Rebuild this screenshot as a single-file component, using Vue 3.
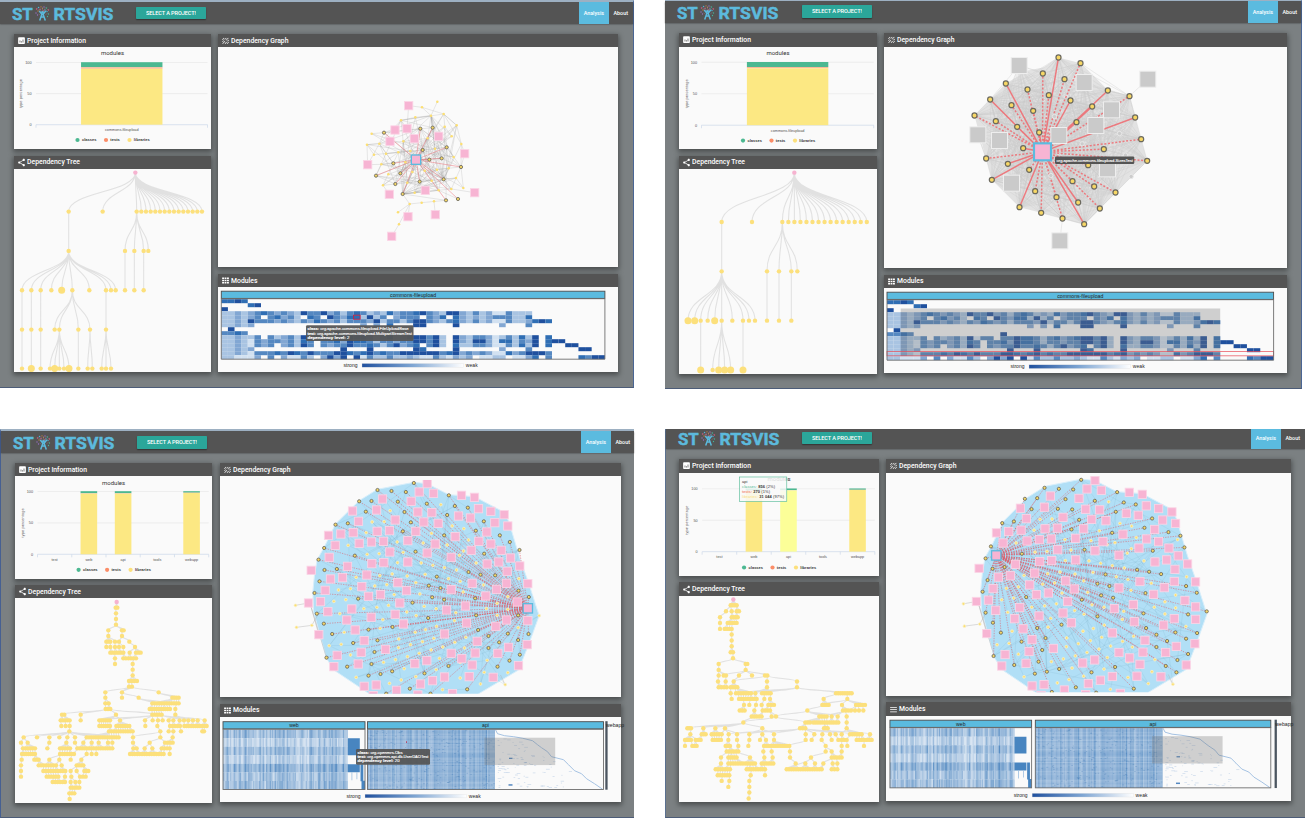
<script setup>
const rng = (seed) => () => {
  seed = (seed + 0x6d2b79f5) | 0
  let t = Math.imul(seed ^ (seed >>> 15), 1 | seed)
  t = (t + Math.imul(t ^ (t >>> 7), 61 | t)) ^ t
  return ((t ^ (t >>> 14)) >>> 0) / 4294967296
}
const pts = (s) => s.trim().split(/[\s;]+/).map((p) => p.split(',').map(Number))
const dist = (a, b) => Math.hypot(a[0] - b[0], a[1] - b[1])
const line = (a, b) => `M${a[0]} ${a[1]}L${b[0]} ${b[1]}`
const curve = (a, b) => {
  const m = (a[1] + b[1]) / 2
  return `M${a[0]} ${a[1]}C${a[0]} ${m} ${b[0]} ${m} ${b[0]} ${b[1]}`
}

/* ---------- dependency graphs ---------- */
function smallGraph() {
  const squares = pts('281,317;240,390;276,386;298,416;371,409;225,424;449,461;158,494;223,583;331,571;479,578;279,650;361,644;230,709')
  const ringed = pts('207,398;316,386;353,383;395,442;323,450;380,475;343,479;235,490;438,501;183,527;256,520;241,552;314,545;386,538;263,582;393,601;429,597')
  const plain = pts('367,305;321,322;348,347;386,342;301,352;258,361;425,376;389,380;170,401;410,409;156,434;193,431;439,432;177,464;213,461;250,457;265,424;338,415;286,453;360,446;416,471;199,493;271,487;220,523;329,512;366,509;401,505;292,516;277,548;204,556;423,534;350,542;371,571;409,567;445,564;299,578;284,612;320,608;357,604;249,637;252,673')
  const sel = [303, 479]
  const inner = [...ringed, ...plain.filter((p) => p[1] < 600 && p[1] > 340)]
  const r = rng(7)
  let edges = ''
  inner.forEach((a, i) => inner.forEach((b, j) => {
    if (j > i && dist(a, b) < 150 && r() < 0.17) edges += line(a, b)
  }))
  const hubs = pts('386,538;263,582;348,347;323,450;395,442;303,479')
  hubs.forEach((h) => inner.forEach((b) => { if (dist(h, b) < 170 && r() < 0.42) edges += line(h, b) }))
  const extra = pts('230,709;252,673;252,673;284,612;249,637;284,612;279,650;284,612;361,644;357,604;479,578;409,567;367,305;348,347;281,317;321,322;281,317;276,386;158,494;156,434;158,494;199,493;158,494;193,431;321,322;348,347;258,361;301,352;386,342;425,376;439,432;425,376;284,612;263,582;284,612;320,608;320,608;393,601;156,434;193,431;170,401;207,398;445,564;438,501;449,461;438,501;223,583;204,556;449,461;439,432;321,322;386,342;258,361;240,390;331,571;263,582')
  for (let i = 0; i < extra.length; i += 2) edges += line(extra[i], extra[i + 1])
  return { tf: 'translate(315 0) scale(.33333)', clip: [218, 47, 400, 220], squares, ringed, plain, sel, size: 25, r: 4.8, pr: 3.8, edges, solid: ringed.map((p) => line(sel, p)).join(''), kind: 'small' }
}
function greyGraph() {
  const squares = pts('164,195;550,236;359,246;441,328;394,375;283,405;40,403;105,420;141,548;429,505;286,721')
  const solidPts = pts('282,171;124,249;318,300;430,270;77,297;383,318;158,379;336,365;512,351;224,396;176,443;130,490;82,538;341,606;165,620;359,671')
  const dashPts = pts('348,188;235,219;300,236;189,267;253,284;495,287;141,314;206,331;30,345;94,362;530,416;418,446;65,474;548,481;194,508;371,494;324,542;389,558;453,576;212,572;276,590;230,637;406,624;294,654')
  const muted = pts('270,348;353,430;465,399;483,464;259,525;500,528')
  const sel = [234, 454]
  const all = [...solidPts, ...dashPts]
  const r = rng(3)
  let edges = ''
  all.forEach((a, i) => all.forEach((b, j) => { if (j > i && r() < 0.55) edges += line(a, b) }))
  edges += line([550, 236], [495, 287]) + line([286, 721], [294, 654]) + line([40, 403], [65, 474])
  squares.slice(0, 10).forEach((s) => all.forEach((b) => { if (s[0] !== 550 && r() < 0.4) edges += line(s, b) }))
  return { tf: 'translate(965 0) scale(.33333)', clip: [885, 47, 402, 221], squares, ringed: all, plain: [], muted, sel, size: 48, r: 7.6, pr: 5, edges, hull: '282,171 348,188 430,270 495,287 512,351 530,416 548,481 500,528 453,576 406,624 359,671 294,654 230,637 165,620 82,538 65,474 50,420 30,345 77,297 124,249 190,210 240,200', solid: solidPts.map((p) => line(sel, p)).join(''), dashed: dashPts.map((p) => line(sel, p)).join(''), kind: 'grey' }
}
const bigSquares = pts('335,176;311,201;354,205;438,211;477,217;201,222;287,229;489,251;183,255;111,258;307,261;349,263;526,259;566,269;429,273;465,279;129,289;239,285;325,291;368,295;538,293;577,303;39,331;76,327;113,323;185,319;222,317;301,319;514,321;419,335;131,355;168,351;204,349;277,347;490,349;526,357;359,357;59,361;223,381;335,384;467,376;557,376;41,397;407,397;585,399;96,424;169,416;205,413;277,411;515,417;550,411;613,423;575,439;154,450;81,458;45,462;247,473;470,475;573,475;637,476;139,485;273,497;407,494;543,493;29,496;159,514;195,509;511,513;15,530;253,534;605,531;37,560;109,552;450,543;393,555;637,550;167,577;239,568;94,585;264,597;453,594;573,585;637,587;541,604;119,615;387,627;146,647;485,649;10,629;635,659;579,667;65,691;137,682;210,673;407,685;479,684;547,685;439,701;55,725;128,717;298,716;334,707;470,720;609,722;146,784;182,780;315,777;351,767;387,756;461,755;533,757;243,796;173,812;307,810;411,806;-13,436;-21,534')
const bigRinged = pts('295,174;186,195;228,198;271,201;131,229;168,228;247,230;334,236;400,211;418,243;457,248;151,260;267,261;395,270;286,292;60,299;97,295;505,289;481,317;553,331;262,319;386,331;583,351;26,369;612,375;9,404;118,392;300,380;506,386;64,432;27,435;459,441;539,451;495,449;364,455;12,469;340,482;375,489;609,497;-3,504;128,521;350,517;386,524;479,520;640,516;291,533;4,566;338,579;482,571;608,571;25,596;159,614;231,606;488,615;639,627;50,627;113,654;186,646;519,633;577,626;608,645;551,652;519,669;177,681;33,698;613,689;95,725;168,717;582,707;546,725;159,752;195,747;230,739;399,723;327,745;283,791;455,793;345,806;212,806')
const bigPlain = pts('376,239;224,257;206,290;170,291;410,303;445,311;152,323;348,325;459,345;98,361;245,351;323,354;371,366;395,360;155,388;191,386;263,382;444,378;432,391;246,413;317,414;352,421;387,428;423,435;482,414;610,461;122,457;193,452;230,447;275,453;329,448;399,461;434,469;178,483;214,479;301,473;69,495;105,491;504,480;236,509;313,507;443,501;577,515;55,529;91,524;545,535;73,566;145,551;184,547;219,541;326,544;362,551;513,551;577,553;545,571;202,584;274,561;302,572;421,563;417,587;86,622;194,610;299,622;363,604;330,614;608,608;250,642;285,659;321,650;355,640;418,652;451,637;41,662;77,658;249,668;347,675;382,666;311,685;447,669;105,690;240,704;204,712;276,695;372,700;515,706;266,731;362,734;434,712;301,755;434,759;506,742;577,743;122,757;222,775;257,765;495,777;381,794;671,572;569,779')
const bigHull = pts('295,172;335,176;400,209;477,215;566,262;580,290;613,400;640,476;671,572;639,660;609,735;480,812;170,812;55,735;33,700;-6,560;-8,500;-3,450;5,404;26,367;60,297;131,227;186,193')
const tails = pts('-60,541;-57,607;-11,601')
function bigGraph(second) {
  const f = second ? (p) => [p[0] + 53.5, p[1] * 1.0147 - 13.6] : (p) => p
  const ringed = second
    ? pts('347,163;237,187;280,190;323,192;178,220;215,218;300,221;388,226;455,200;475,231;511,237;198,251;277,250;320,252;451,259;341,283;110,293;145,288;560,279;537,307;609,320;318,312;440,322;645,331;76,363;657,366;60,399;169,385;357,373;562,376;81,430;117,425;515,433;551,439;587,446;420,447;66,464;396,475;432,482;662,482;51,499;182,515;407,510;443,517;540,503;694,502;349,523;60,562;396,573;534,564;668,567;724,558;82,592;215,608;288,598;542,608;695,623;630,621;106,622;168,649;240,638;573,628;605,647;662,640;573,665;230,674;84,692;668,686;146,719;219,709;636,704;601,722;633,741;208,745;244,739;281,731;449,725;378,741;331,786;505,790;392,802;259,800')
    : bigRinged
  const sel = second ? [92, 390] : [637, 550]
  const plain = (second ? [...bigPlain, ...bigRinged] : bigPlain).map(f).filter((p) => !second || ringed.every((q) => dist(p, q) > 14))
  const squares = bigSquares.map(f).filter((p) => dist(p, sel) > 12)
  const r = rng(11)
  const all = [...ringed, ...plain]
  let edges = ''
  for (let i = 0; i < 130; i++) edges += line(all[Math.floor(r() * all.length)], all[Math.floor(r() * all.length)])
  const [t1, t2, t3] = tails.map(f)
  const tailEdges = line(t1, f([-21, 534])) + line(t2, t3) + line(t3, f([12, 560])) + line(f([-15, 540]), f([33, 698])) + line(f([-15, 540]), f([10, 629])) + line(f([569, 779]), f([555, 750]))
  return { tf: `translate(${second ? 965 : 315} 425) scale(.33333)`, clip: second ? [886, 475.5, 404, 216.5] : [220, 480, 400, 213.7], squares, ringed, plain: [...plain, t1, t2, t3], sel, size: 25, r: 4.8, pr: 4.2, edges, tailEdges, hull: bigHull.map(f).join(' '), dashed: ringed.map((p) => line(sel, p)).join(''), kind: 'big' }
}

/* ---------- dependency trees ---------- */
function tree(tf, root, levels, links, big) {
  const nodes = levels.flatMap(([y, xs]) => xs.map((x) => [x, y, big.some((b) => b[0] === x && b[1] === y) ? 10.5 : 6.6]))
  return { tf, root, nodes, links: links.map(([x, y, ty, xs]) => xs.map((t) => curve([x, y], [t, ty])).join('')).join('') }
}
const seq = (a, n, step) => Array.from({ length: n }, (_, i) => a + i * step)
const fan1 = seq(410, 15, 14)
const fan2 = seq(367, 15, 18.1)
const tree1 = tree('scale(.33333)', [406, 517],
  [[634, [206, 308, ...fan1]], [752, [206, 375, 403, 431, 445]], [870, [66, 94, 122, 154, 185, 217, 268, 318, 333, 347, 375, 403, 431]], [988, [66, 94, 122, 164, 178, 235, 270, 318]], [1105, [66, 94, 122, 150, 164, 178, 192, 207, 235, 263, 277, 305, 318, 333]]],
  [[406, 517, 634, [206, 308, ...fan1]], [206, 634, 752, [206]], [410, 634, 752, [375, 403, 431, 445]], [206, 752, 870, [66, 94, 122, 154, 185, 217, 268, 318, 333, 347]], [375, 752, 870, [375]], [403, 752, 870, [403]], [431, 752, 870, [431]], [66, 870, 1105, [66]], [94, 870, 1105, [94]], [122, 870, 1105, [122]], [217, 870, 988, [164, 178, 235, 270]], [318, 870, 988, [318]], [178, 988, 1105, [150, 164, 178, 192, 207]], [235, 988, 1105, [235]], [270, 988, 1105, [263, 277]], [318, 988, 1105, [305, 318, 333]]],
  pts('185,870;94,1105;164,1105;207,1105'))
const tree2 = tree('translate(660 0) scale(.33333)', [403, 518],
  [[666, [185, 276, ...fan2]], [814, [185, 321, 357, 394, 412]], [962, [84, 104, 122, 143, 164, 185, 217, 249, 267, 285, 321, 357, 394]], [1110, [122, 158, 176, 194, 212, 249]]],
  [[403, 518, 666, [185, 276, ...fan2]], [185, 666, 814, [185]], [367, 666, 814, [321, 357, 394, 412]], [185, 814, 962, [84, 104, 122, 143, 164, 185, 217, 249, 267, 285]], [321, 814, 962, [321]], [357, 814, 962, [357]], [394, 814, 962, [394]], [122, 962, 1110, [122]], [185, 962, 1110, [158, 176, 194, 212]], [249, 962, 1110, [249]]],
  pts('84,962;104,962;164,962;122,1110;176,1110;194,1110;212,1110;249,1110'))

function denseTree(tf, root, spec, long) {
  const rows = spec.trim().split(/\n/).map((l) => {
    const [y, rest] = l.trim().split(':')
    const xs = rest.split(',').flatMap((s) => {
      const [a, b] = s.split('-').map(Number)
      if (b === undefined) return [a]
      const n = Math.max(1, Math.round((b - a) / 7))
      return seq(a, n + 1, (b - a) / n)
    })
    return [Number(y), xs]
  })
  let links = ''
  rows.forEach(([y, xs], i) => {
    const [py, pxs] = i ? rows[i - 1] : [root[1], [root[0]]]
    xs.forEach((x) => {
      const p = pxs.reduce((m, c) => (Math.abs(c - x) < Math.abs(m - x) ? c : m))
      if (Math.abs(p - x) < 62) links += curve([p, py], [x, y])
    })
  })
  long.forEach((l) => { links += curve([l[0], l[1]], [l[2], l[3]]) })
  return { tf, root, nodes: rows.flatMap(([y, xs]) => xs.map((x) => [x, y, 6.6])), links }
}
const tree3 = denseTree('translate(0 425) scale(.33333)', [350, 531], `548:347-352
565:348
582:348
599:348
616:325,366-371
633:325,366
650:319-331,345,357,388
666:319,331,345,357,370,405
683:331-370,389,408-422
700:345,370-408
717:345,398
734:398
751:398
768:387-411
785:387,396
802:316,366,476
818:316,366,416,517-536
835:316-326,457-536
852:317-331,449-510,526
869:186-193,242,348,457-485,526
886:182-209,242,298-330,360,435,458,474,488,506,520,539,552,565,579,593,614
903:184,197,209,298-330,349-388,436,472,510-540,553-620
919:208,327-398,481,506,520,543,607-612
937:71,111,148,178,202,225,260-356,399,481,518
953:63,83,148,199,225,250,275,296,324,337,399,449,495-518
970:69-105,142,180-210,232-337,400-410,434,457,485-509
987:66-105,180-222,260,275,289,390-491,509
1004:65,103-116,148,178,212,244
1021:63,116-168,185,230-250
1038:63,130-196,212,230,253-265
1055:63,140-175,195,214,240-257
1071:158-195,212,226,238
1088:212-238
1105:208-223
1122:209`, [[387, 785, 316, 802], [396, 785, 476, 802], [396, 785, 366, 802], [366, 802, 416, 818], [416, 818, 457, 835], [416, 818, 470, 835], [476, 802, 517, 818], [476, 802, 530, 818], [416, 818, 500, 835], [317, 852, 242, 869], [317, 852, 186, 869], [331, 852, 348, 869], [331, 852, 457, 869], [331, 852, 470, 869], [457, 869, 360, 886], [457, 869, 298, 886], [470, 869, 318, 886], [485, 869, 614, 886], [485, 869, 565, 886], [485, 869, 540, 886], [208, 919, 71, 937], [208, 919, 111, 937], [208, 919, 148, 937], [208, 919, 260, 937], [208, 919, 290, 937], [208, 919, 320, 937], [208, 919, 356, 937], [481, 919, 399, 937]])
const tree4 = denseTree('translate(660 425) scale(.33333)', [220, 524], `541:212-230
559:198,215,230-237
577:180,215-233
594:180,203-230
612:180,194-215
629:215
647:215
664:215
682:212-219
700:219
717:176,257-262
735:176,257
752:176,191-198,237,276,315-322
770:174,197,221,321,411
787:176-200,212-232,321,411
805:212,228-273,286,306-332,528-575
822:215,237-290,313,330,491,562
840:252,268,288,305,325-342,487-506,546,588-615
857:239-254,283,308-330,442,549-573,585,597,610
875:275-305,335,348,478-500,515,533,560
893:250,436-450,460-535,560
910:82-93,130,166,195,307,420-436,492-503,560
928:91,125-137,155-185,206,231,268,307,342,437,463,487,510,527,545,570-605,630
945:75-93,107-122,158-183,205,231,268,300,318,342,437,455,485,515,535,545-560,590-635
963:75,97-110,197-210,235,265,312-388,497,545,562,612
980:200-235,310,335,390,497,515,545
998:183,205-230,270,313,338,390,453,515-545
1016:183,205-285,305-340,407,436,465,490,518,532
1033:167-210,260-315,380-485,515-532
1051:173-208,272,315
1068:185,208,268
1086:205,268
1103:268
1121:266`, [[257, 735, 191, 752], [257, 735, 322, 752], [322, 752, 411, 770], [315, 752, 221, 770], [411, 787, 240, 805], [411, 787, 286, 805], [411, 787, 320, 805], [411, 787, 528, 805], [411, 787, 545, 805], [562, 822, 491, 840], [562, 822, 600, 840], [442, 857, 348, 875], [442, 857, 533, 875], [442, 857, 500, 875], [348, 875, 250, 893], [348, 875, 436, 893], [250, 893, 88, 910], [250, 893, 130, 910], [250, 893, 166, 910], [250, 893, 195, 910], [250, 893, 307, 910], [420, 910, 206, 928], [420, 910, 231, 928], [420, 910, 268, 928], [420, 910, 342, 928], [436, 910, 570, 928], [436, 910, 630, 928], [436, 910, 527, 928], [342, 945, 388, 963], [437, 945, 388, 963], [453, 998, 390, 1033], [497, 980, 453, 998]])

/* ---------- matrices ---------- */
const blues = ['', '#d2e1f1', '#a9c4e2', '#82a7d3', '#5588c1', '#2f6eb4', '#1f509e']
const matrixRows = [
  '5565',
  '000056',
  '6',
  '22323454343264463424542325344564326632423114222',
  '22323404534205406435526240344404350532323444225',
  '22326444343243543424443624424664324532423114223565',
  '22323000000000000000030305000660000600000030004',
  '06',
  '44540000000000000600',
  '22322404234261440446554245345664620632443124252',
  '22321434434254044536554244344664620632663155243',
  '22321434034264043446445424634504620522443114252',
  '22323000000000000060006000000650000600000030004',
  '22321444546546444665456454466666645634343115346',
  '22111304031142036360614224223211421323011220113',
]
const rowTails = { 9: [[47, 6], [49, 5]], 10: [[47, 6], [49, 5], [50, 6], [51, 6]], 11: [[47, 6], [49, 5], [52, 6], [53, 6]], 12: [[54, 6], [55, 6]], 13: [[47, 6], [48, 6], [49, 4]], 14: [[47, 5], [49, 4], [54, 5], [55, 4], [56, 6], [57, 6]] }
const cells = matrixRows.flatMap((row, y) => {
  const c = [...row.slice(0, rowTails[y] ? 47 : 58)].map((v, x) => [x, y, Number(v)])
  return [...c, ...(rowTails[y] || []).map(([x, v]) => [x, y, v])].filter((k) => k[2] > 0)
})
const mix = (t) => {
  const a = [212, 226, 241], b = [72, 130, 189]
  return `rgb(${a.map((v, i) => Math.round(v + (b[i] - v) * t)).join(',')})`
}
const rw = rng(21)
const webCols = Array.from({ length: 104 }, () => [rw(), rw()])
const webStripes = []
for (let y = 0; y < 7; y++) webCols.forEach(([c, d], x) => {
  const base = [0.44, 0.2, 0.42, 0.22, 0.54, 0.36, 0.42][y]
  webStripes.push([x * 1.2, y * 8.55, mix(Math.max(0, Math.min(1, base + (c - 0.5) * 0.5 + (d > 0.92 ? 0.35 : 0) + (rw() - 0.5) * 0.3 - (x > 55 && x < 72 ? 0.15 : 0))))])
})
const ra = rng(5)
const apiCols = Array.from({ length: 98 }, () => [ra() * 1.3, mix(0.36 + ra() * 0.34 + (ra() > 0.9 ? 0.2 : 0))])
const apiRows = Array.from({ length: 46 }, (_, i) => [i * 1.3, ra() * 0.24])
const specks = Array.from({ length: 110 }, () => [130 + Math.pow(ra(), 1.5) * 75, 8 + ra() * 51, 0.6 + ra() * 3.2]).filter((s) => s[0] < 132 + s[1] * 1.75)
const dust = Array.from({ length: 260 }, () => [ra() * 126, ra() * 59, 1 + ra()])
const stair = '128,0 130,4 137,6 146,7 155,8.5 165,11 170,15 174,18 180,22 184,27 196,30 201,35 207,41 214,44 219,49 227,54 235,59.5'

/* ---------- chart geometry ---------- */
const five = ['test', 'web', 'api', 'tools', 'webapp']
const mkChart = (x0, x1, y0, y1, cx, ty, cy, ly, names, bars) => {
  const w = (x1 - x0) / names.length
  return { x0, x1, y0, y1, cx, ty, ly, ticks: seq(x0, names.length + 1, w), labels: names.map((n, i) => ({ n, x: x0 + w * (i + 0.5), y: cy })), bars: bars.map(([i, g, hot]) => ({ x: x0 + w * (i + 0.5) - (names.length === 1 ? 40.7 : 8.3), w: names.length === 1 ? 81.4 : 16.6, g, hot })) }
}
const icons = {
  info: 'M19 3H5c-1.1 0-2 .9-2 2v14c0 1.1.9 2 2 2h14c1.1 0 2-.9 2-2V5c0-1.1-.9-2-2-2zM9 17H7v-5h2v5zm4 0h-2v-3h2v3zm4 0h-2V9h2v8z',
  share: 'M18 16.08c-.76 0-1.44.3-1.96.77L8.91 12.7c.05-.23.09-.46.09-.7s-.04-.47-.09-.7l7.05-4.11c.54.5 1.25.81 2.04.81 1.66 0 3-1.34 3-3s-1.34-3-3-3-3 1.34-3 3c0 .24.04.47.09.7L8.04 9.81C7.5 9.31 6.79 9 6 9c-1.66 0-3 1.34-3 3s1.34 3 3 3c.79 0 1.5-.31 2.04-.81l7.12 4.16c-.05.21-.08.43-.08.65 0 1.61 1.31 2.92 2.92 2.92s2.92-1.31 2.92-2.92-1.31-2.92-2.92-2.92z',
  graph: 'M3 9.500l5-5 1.200 1.200-5 5zM3 15l3.500-3.500 1.200 1.200L4.200 16.200zM9 9l4.500-4.500 1.200 1.200-4.500 4.500zM3.500 20l6.500-6.500 1.200 1.200-6.500 6.500zM12.500 11l6.500-6.500 1.200 1.200-6.500 6.500zM10 20l4.500-4.500 1.200 1.200-4.500 4.500zM16.500 13.500l3.500-3.500 1.200 1.200-3.500 3.500zM15.500 20l5-5 1.200 1.200-5 5z',
  grid: 'M3 4h5v4H3zM9.500 4h5v4h-5zM16 4h5v4h-5zM3 10h5v4H3zM9.500 10h5v4h-5zM16 10h5v4h-5zM3 16h5v4H3zM9.500 16h5v4h-5zM16 16h5v4h-5z',
  rows: 'M3 5h18v2H3zM3 11h18v2H3zM3 17h18v2H3z',
}
const fireworks = pts('36.5,7;38.5,5.500;41,4.800;44,5;46.500,6;48.500,8;47,9.500;38,9;36,11;48.500,12;40,7.500;45,8;42.500,6.500;37.500,13;47.500,14.500;43.5,9')
const sparkColors = ['#e0587f', '#4fb6dc', '#c7813f', '#9a6fc4', '#44b39a']

const views = [
  { id: 'one', boxes: ['14 47 196.5 101.5', '14 169 196.5 202.5', '218 47 400 220', '218 287 400 84.5'],
    chart: mkChart(36, 207.5, 62.5, 124.7, 112.5, 55.2, 131, 141.4, ['commons-fileupload'], [[0, [5, 1.6]]]),
    tree: tree1, graph: smallGraph(),
    small: { x: 221.3, y: 299.2, w: 383.6, h: 60, tip: true }, legend: [362, 363.5],
    tip: { x: 306, y: 325.3, w: 107.5, lines: [['class:', 'org.apache.commons.fileupload.FileUploadBase', 101], ['test:', 'org.apache.commons.fileupload.MultipartStreamTest', 106], ['dependency level:', '2', 42]] } },
  { id: 'two', boxes: ['679 46.5 198 102.5', '679 169 198 204.5', '884.5 46.5 403 221.5', '884.5 288.5 403 85'],
    chart: mkChart(701.5, 873.7, 61.8, 124.7, 778, 54.7, 131, 141.5, ['commons-fileupload'], [[0, [5, 1.3]]]),
    tree: tree2, graph: greyGraph(),
    small: { x: 887.5, y: 300.7, w: 386.6, h: 60, brush: true }, legend: [1029.5, 365.3] },
  { id: 'three', boxes: ['15 476 197 102.5', '15 598 197 204.5', '219.5 476 401.5 221', '219.5 717 401.5 85.500'],
    chart: mkChart(37.5, 208.7, 491.5, 554.3, 113.6, 484.7, 560.7, 571.2, five, [[1, [2, 0.5]], [2, [2, 0.5]], [4, [1.5, 0.3]]]),
    tree: tree3, graph: bigGraph(false),
    large: { x: 222.5, y: 729.7, api: 144.5, wx: 382.3, dot: true }, legend: [364.5, 794.2],
    tip: { x: 355.5, y: 749, w: 74, lines: [['class:', 'org.openmrs.Obs', 45], ['test:', 'org.openmrs.api.db.UserDAOTest', 71], ['dependency level:', '20', 42]] } },
  { id: 'four', boxes: ['679 472.5 199.5 103', '679 596.5 199.5 205.5', '885.5 472.5 405 223', '885.5 716.5 405 85.5'],
    chart: mkChart(702, 875, 488.3, 551.3, 779, 481, 558, 568.6, five, [[1, [2, 0.5]], [2, [1.7, 0.3], true], [4, [1.3, 0.2]]]),
    tree: tree4, graph: bigGraph(true),
    large: { x: 889, y: 728.7, api: 145.7, wx: 385.5 }, legend: [1031.5, 794], chartTip: true },
]
const names = ['Project Information', 'Dependency Tree', 'Dependency Graph', 'Modules']
const widths = [59, 53, 57.5, 26.5]
const iconFor = (i, v) => [icons.info, icons.share, icons.graph, v.id === 'four' ? icons.rows : icons.grid][i]
</script>

<template>
  <main class="sheet">
    <section v-for="v in views" :key="v.id" class="view" :class="v.id">
      <header class="bar">
        <svg class="logo" viewBox="11 0 104 22">
          <text x="12" y="18.200" textLength="20.800" lengthAdjust="spacingAndGlyphs">ST</text>
          <g>
            <circle v-for="(p, i) in fireworks" :key="i" :cx="p[0]" :cy="p[1]" r="0.65" :fill="sparkColors[i % 5]" />
            <path d="M37 6l4 5M48 7l-4 4M42.500 5v5M38.500 12l2 1M47.500 11l-2 2M39.500 5l2 5M45.500 5l-2 5" stroke="#8d7782" stroke-width=".45" fill="none" />
            <circle cx="42.500" cy="10.200" r="1.300" fill="#5cbadd" />
            <path d="M39.300 9l2.400 3h1.600l2.400-3M42 12l-2.300 6.600M43 12l2.300 6.600M41 15h3" stroke="#5cbadd" stroke-width="1.500" fill="none" />
          </g>
          <text x="53.600" y="18.200" textLength="59.800" lengthAdjust="spacingAndGlyphs">RTSVIS</text>
        </svg>
        <button class="pick"><svg viewBox="0 0 50 8"><text x="0" y="6.100" textLength="50">SELECT A PROJECT!</text></svg></button>
        <nav class="nav">
          <a class="tab active">Analysis</a>
          <a class="tab">About</a>
        </nav>
      </header>
      <div class="board">
        <div class="column">
          <article v-for="k in [0, 1]" :key="k" class="panel" :class="'p' + k">
            <h2 class="caption">
              <svg class="glyph" viewBox="0 0 24 24"><path :d="iconFor(k, v)" /></svg>
              <svg class="name" viewBox="0 0 70 10"><text x="0" y="7" :textLength="widths[k]" lengthAdjust="spacingAndGlyphs">{{ names[k] }}</text></svg>
            </h2>
            <svg v-if="k === 0" class="canvas" :viewBox="v.boxes[0]">
              <text class="title" :x="v.chart.cx" :y="v.chart.ty">modules</text>
              <path :d="`M${v.chart.x0} ${v.chart.y0}H${v.chart.x1}M${v.chart.x0} ${(v.chart.y0 + v.chart.y1) / 2}H${v.chart.x1}`" stroke="#e8e8e8" stroke-width=".7" />
              <path :d="`M${v.chart.x0} ${v.chart.y1}H${v.chart.x1}` + v.chart.ticks.map((t) => `M${t} ${v.chart.y1}v3`).join('')" stroke="#ccd8ea" stroke-width=".7" />
              <g v-for="b in v.chart.bars" :key="b.x">
                <rect :x="b.x" :y="v.chart.y0 - .3" :width="b.w" :height="b.g[0]" fill="#4cb891" />
                <rect :x="b.x" :y="v.chart.y0 + b.g[0] - .3" :width="b.w" :height="b.g[1]" fill="#fbb897" />
                <rect :x="b.x" :y="v.chart.y0 + b.g[0] + b.g[1] - .3" :width="b.w" :height="v.chart.y1 - v.chart.y0 - b.g[0] - b.g[1] + .3" :fill="b.hot ? '#fcfe98' : '#fce883'" />
              </g>
              <g class="axis">
                <text :x="v.chart.x0 - 4.500" :y="v.chart.y0 + 1.400" text-anchor="end">100</text>
                <text :x="v.chart.x0 - 4.500" :y="(v.chart.y0 + v.chart.y1) / 2 + 1.400" text-anchor="end">50</text>
                <text :x="v.chart.x0 - 4.500" :y="v.chart.y1 + 1.400" text-anchor="end">0</text>
                <text v-for="l in v.chart.labels" :key="l.n" :x="l.x" :y="l.y" text-anchor="middle" :textLength="l.n.length > 8 ? 33.500 : undefined">{{ l.n }}</text>
                <text class="side" text-anchor="middle" textLength="29" :transform="`translate(${v.chart.x0 - 14} ${(v.chart.y0 + v.chart.y1) / 2}) rotate(-90)`">type percentage</text>
              </g>
              <g class="key" :transform="`translate(${v.chart.cx} ${v.chart.ly})`">
                <circle cx="-35" cy="-1.400" r="2.100" fill="#4cb891" /><text x="-30.500" textLength="14.500">classes</text>
                <circle cx="-6.500" cy="-1.400" r="2.100" fill="#fb8d68" /><text x="-2.200" textLength="9.500">tests</text>
                <circle cx="17" cy="-1.400" r="2.100" fill="#fce07c" /><text x="21.300" textLength="16">libraries</text>
              </g>
              <g v-if="v.chartTip" class="charttip">
                <rect x="739.500" y="476.500" width="47.300" height="24.700" fill="#f9f9f9" fill-opacity=".85" stroke="#4cb891" stroke-width=".6" />
                <text x="742" y="483">api</text>
                <text x="742" y="487.800" textLength="33"><tspan fill="#4cb891">classes:</tspan> <tspan class="b">856</tspan> (2%)</text>
                <text x="742" y="492.700" textLength="28"><tspan fill="#f05a4a">tests:</tspan> <tspan class="b">270</tspan> (1%)</text>
                <text x="742" y="498" textLength="42"><tspan fill="#fbe07c">libraries:</tspan> <tspan class="b">31 044</tspan> (97%)</text>
              </g>
            </svg>
            <svg v-else class="canvas" :viewBox="v.boxes[1]">
              <g :transform="v.tree.tf">
                <path :d="v.tree.links" fill="none" stroke="#c4c4c4" stroke-opacity=".45" stroke-width="3.200" />
                <circle v-for="(n, i) in v.tree.nodes" :key="i" :cx="n[0]" :cy="n[1]" :r="n[2]" fill="#fce07c" />
                <circle :cx="v.tree.root[0]" :cy="v.tree.root[1]" r="6.600" fill="#f6b3d0" />
              </g>
            </svg>
          </article>
        </div>
        <div class="column">
          <article v-for="k in [2, 3]" :key="k" class="panel" :class="'p' + k">
            <h2 class="caption">
              <svg class="glyph" viewBox="0 0 24 24"><path :d="iconFor(k, v)" /></svg>
              <svg class="name" viewBox="0 0 70 10"><text x="0" y="7" :textLength="widths[k]" lengthAdjust="spacingAndGlyphs">{{ names[k] }}</text></svg>
            </h2>
            <svg v-if="k === 2" class="canvas" :viewBox="v.boxes[2]">
              <clipPath :id="'clip-' + v.id"><rect :x="v.graph.clip[0]" :y="v.graph.clip[1]" :width="v.graph.clip[2]" :height="v.graph.clip[3]" /></clipPath>
              <g :clip-path="`url(#clip-${v.id})`">
                <g :transform="v.graph.tf" :class="v.graph.kind">
                  <polygon v-if="v.graph.hull" class="hull" :points="v.graph.hull" />
                  <path class="edges" :d="v.graph.edges" />
                  <path v-if="v.graph.tailEdges" class="tails" :d="v.graph.tailEdges" />
                  <path v-if="v.graph.dashed" class="hot dash" :d="v.graph.dashed" />
                  <path v-if="v.graph.solid" class="hot" :d="v.graph.solid" />
                  <circle v-for="(n, i) in v.graph.plain" :key="'p' + i" class="plain" :cx="n[0]" :cy="n[1]" :r="v.graph.pr" />
                  <circle v-for="(n, i) in v.graph.muted || []" :key="'m' + i" :cx="n[0]" :cy="n[1]" r="6.500" fill="#ccc" stroke="#e8e8e8" stroke-width="3" />
                  <circle v-for="(n, i) in v.graph.ringed" :key="'r' + i" class="ringed" :cx="n[0]" :cy="n[1]" :r="v.graph.r" />
                  <rect v-for="(n, i) in v.graph.squares" :key="'s' + i" class="module" :x="n[0] - v.graph.size / 2" :y="n[1] - v.graph.size / 2" :width="v.graph.size" :height="v.graph.size" />
                  <rect class="chosen" :x="v.graph.sel[0] - v.graph.size / 2 - 1.500" :y="v.graph.sel[1] - v.graph.size / 2 - 1.500" :width="v.graph.size + 3" :height="v.graph.size + 3" />
                </g>
                <g v-if="v.id === 'two'" class="tip">
                  <rect x="1055.500" y="156" width="79.300" height="7.600" rx="1.300" fill="#555" />
                  <text x="1057" y="161.400" textLength="76.500" lengthAdjust="spacingAndGlyphs">org.apache.commons.fileupload.SizesTest</text>
                </g>
              </g>
            </svg>
            <svg v-else class="canvas open" :viewBox="v.boxes[3]">
              <template v-if="v.small">
                <rect :x="v.small.x" :y="v.small.y - 8" :width="v.small.w" height="7.200" fill="#5bbbdf" stroke="#4c4c4c" stroke-width=".9" />
                <text class="band" :x="v.small.x + v.small.w / 2" :y="v.small.y - 2.500" textLength="46">commons-fileupload</text>
                <g>
                  <rect v-for="(c, i) in cells" :key="i" :x="v.small.x + c[0] * v.small.w / 58" :y="v.small.y + c[1] * 4" :width="v.small.w / 58" height="4" :fill="blues[c[2]]" />
                </g>
                <g v-if="v.small.brush">
                  <rect x="901.200" y="309" width="319.500" height="47.700" fill="#777" fill-opacity=".32" />
                  <rect :x="v.small.x" y="352" :width="v.small.w" height="4.300" fill="none" stroke="#e8505b" stroke-opacity=".8" stroke-width=".9" />
                </g>
                <rect v-else :x="v.small.x + 20 * v.small.w / 58" :y="v.small.y + 16" width="6.600" height="4" fill="none" stroke="#c02040" stroke-width=".9" />
                <path :d="`M${v.small.x} ${v.small.y - .5}H${v.small.x + v.small.w}V${v.small.y + v.small.h}H${v.small.x}Z`" fill="none" stroke="#6e6e6e" stroke-width=".9" />
              </template>
              <g v-else :transform="`translate(${v.large.x} ${v.large.y})`">
                <g fill="#5bbbdf" stroke="#4c4c4c" stroke-width=".9">
                  <rect x="0" y="-8" width="142" height="7.200" /><rect :x="v.large.api" y="-8" width="236" height="7.200" />
                </g>
                <text class="band" x="71" y="-2.600">web</text>
                <text class="band" :x="v.large.api + 118" y="-2.600">api</text>
                <g>
                  <rect v-for="(s, i) in webStripes" :key="i" :x="s[0]" :y="s[1]" width="1.400" height="8.600" :fill="s[2]" />
                  <path d="M124.800 8.500h12v17h-12zM124.800 34.500h12v8h-12zM137.500 34.500h2.800v17h-2.800zM138.500 51h3.500v9h-3.500z" fill="#4885c0" />
                  <path d="M128.500 42.500h.8v8h-.8zM133.500 42.500h.8v7h-.8z" fill="#9dbfe0" />
                </g>
                <g :transform="`translate(${v.large.api} 0)`">
                  <rect width="127.400" height="59.800" fill="#8db0d8" />
                  <rect v-for="(c, i) in apiCols" :key="'c' + i" :x="i * 1.3" y="0" width="1.300" height="59.800" :fill="c[1]" />
                  <rect v-for="(r, i) in apiRows" :key="'r' + i" x="0" :y="r[0]" width="127.400" height="1.300" fill="#fff" :fill-opacity="r[1]" />
                  <rect v-for="(d, i) in dust" :key="'d' + i" :x="d[0]" :y="d[1]" :width="d[2]" height=".8" fill="#3f77b5" fill-opacity=".35" />
                  <rect v-for="(s, i) in specks" :key="'k' + i" :x="s[0]" :y="s[1]" :width="s[2]" height=".6" fill="#8fb2d9" fill-opacity=".5" />
                  <rect x="141" y="54.500" width="4" height="1.500" fill="#5588c1" /><rect x="141.500" y="28" width="3.500" height="1.300" fill="#5588c1" />
                  <polyline :points="stair" fill="none" stroke="#8fb4dc" stroke-width=".8" />
                  <rect x="117" y="8" width="70.700" height="27.400" fill="#777" fill-opacity=".32" />
                  <rect v-if="v.large.dot" x="38.800" y="11.500" width=".7" height="1.800" fill="#c02040" />
                </g>
                <g fill="none" stroke="#6e6e6e" stroke-width=".9">
                  <rect x="0" y="-.5" width="142" height="60.300" /><rect :x="v.large.api" y="-.5" width="236" height="60.300" />
                </g>
                <rect :x="v.large.wx" y="-8.500" width="2.300" height="68.500" fill="#4b5560" />
                <text class="band" :x="v.large.wx + 9.800" y="-2.600">webapp</text>
              </g>
              <g v-if="v.tip" class="tip">
                <rect :x="v.tip.x" :y="v.tip.y" :width="v.tip.w" height="15.800" rx="1.300" fill="#555" fill-opacity=".94" />
                <text v-for="(l, i) in v.tip.lines" :key="i" :x="v.tip.x + 1.500" :y="v.tip.y + 5 + i * 4.200" :textLength="Math.min(l[2], v.tip.w - 3)" lengthAdjust="spacingAndGlyphs"><tspan class="b">{{ l[0] }}</tspan> {{ l[1] }}</text>
              </g>
              <linearGradient :id="'ramp-' + v.id"><stop offset="0" stop-color="#1f509e" /><stop offset=".5" stop-color="#7fa6d3" /><stop offset="1" stop-color="#fff" /></linearGradient>
              <rect :x="v.legend[0]" :y="v.legend[1]" width="101.500" height="3.700" :fill="`url(#ramp-${v.id})`" stroke="#ddd" stroke-width=".3" />
              <text class="scale" :x="v.legend[0] - 18.500" :y="v.legend[1] + 3.500" textLength="14">strong</text>
              <text class="scale" :x="v.legend[0] + 103.700" :y="v.legend[1] + 3.500" textLength="12">weak</text>
            </svg>
          </article>
        </div>
      </div>
    </section>
  </main>
</template>

<style>
body { background: #fff; overflow: hidden; }
</style>
<style scoped>
.sheet { width: 1305px; height: 818px; display: grid; grid-template-columns: 634px 640px; grid-template-rows: 388.5px 389px; column-gap: 31px; row-gap: 40.5px; font-family: Roboto, "Liberation Sans", sans-serif; overflow: hidden; }
.view { box-sizing: border-box; background: #7b8082; border: 0 solid #9db0c2; display: flex; flex-direction: column; }
.one { width: 634px; height: 388px; border-top-width: 2px; border-right: 1.500px solid #4b6694; border-bottom: 1px solid #4c5c78; --lw: 196.500px; --rw: 400px; --lx: 14px; --top: 10px; --h0: 114.500px; --h1: 216px; --h2: 233px; --h3: 97.500px; --g: 7px; --cap: 13px; --bar: 22px; }
.two { width: 637px; height: 388.500px; border-top-width: 1px; border-right: 1px solid #4b6694; border-bottom: 1px solid #4c5c78; --lw: 198px; --rw: 403px; --lx: 14px; --top: 10px; --h0: 116px; --h1: 218px; --h2: 235px; --h3: 98.500px; --g: 6.700px; --cap: 13.500px; --bar: 22px; }
.three { width: 634px; height: 389px; border-top-width: 2px; border-left: 1px solid #466092; border-bottom: 1px solid #4c5c78; --lw: 197px; --rw: 401.500px; --lx: 14px; --top: 10px; --h0: 115.500px; --h1: 217.500px; --h2: 234px; --h3: 98.500px; --g: 6.700px; --cap: 13px; --bar: 22px; }
.four { width: 640px; height: 388.500px; border-left: 1px solid #5b7190; border-bottom: 1px solid #4c5c78; --lw: 199.500px; --rw: 405px; --lx: 13px; --top: 10px; --h0: 116.500px; --h1: 220px; --h2: 236.500px; --h3: 99px; --g: 6.800px; --cap: 13.700px; --bar: 20px; }
.bar { height: var(--bar); flex: none; background: #545454; display: flex; align-items: flex-start; box-shadow: 0 .5px 1.500px rgba(0, 0, 0, .45); }
.logo { width: 104px; height: 22px; margin: 0 0 0 11px; flex: none; }
.one .logo, .two .logo, .three .logo { margin-top: -.5px; }
.four .logo { margin-top: -2.500px; }
.logo text { font: 700 17.300px Roboto, sans-serif; fill: #5cbadd; stroke: #5cbadd; stroke-width: .5px; }
.pick { border: 0; padding: 0; margin: 4.500px 0 0 20.500px; width: 70px; height: 12.500px; flex: none; background: #2ba69a; border-radius: .7px; box-shadow: 0 1px 1.500px rgba(0, 0, 0, .4); display: flex; align-items: center; justify-content: center; }
.pick svg { width: 50px; height: 8px; }
.pick text { font: 500 5.600px Roboto, sans-serif; fill: #fff; }
.two .pick { margin-left: 21.500px; margin-top: 4px; }
.three .pick { margin-top: 5px; }
.four .pick { margin-left: 20.500px; margin-top: 2.500px; }
.nav { margin-left: auto; display: flex; height: 100%; }
.tab { display: flex; align-items: center; justify-content: center; width: 24.500px; font-size: 5.400px; font-weight: 500; color: #fff; }
.tab.active { width: 29.300px; background: #5bbbdf; }
.two .nav, .three .nav { margin-right: -1px; }
.four .tab { padding-bottom: 3px; box-sizing: border-box; height: 100%; }
.board { display: grid; grid-template-columns: var(--lw) var(--rw); column-gap: 7.500px; padding: var(--top) 0 0 var(--lx); }
.two .board, .four .board { column-gap: 7px; }
.column { display: flex; flex-direction: column; gap: var(--g); }
.panel { background: #fafafa; box-shadow: 0 2px 5px 1px rgba(0, 0, 0, .4); display: flex; flex-direction: column; }
.p0 { height: var(--h0); }
.p1 { height: var(--h1); }
.p2 { height: var(--h2); }
.p3 { height: var(--h3); }
.caption { margin: 0; padding-left: 3px; height: var(--cap); flex: none; background: #545454; display: flex; align-items: center; gap: 1px; }
.glyph { width: 9px; height: 9px; fill: #fff; }
.name { width: 70px; height: 10px; }
.name text { font: 500 7.100px Roboto, sans-serif; fill: #fff; }
.canvas { display: block; width: 100%; flex: 1; min-height: 0; }
.open { overflow: visible; }
.title { font-size: 6px; fill: #333; text-anchor: middle; }
.axis text { font: 3.800px "Liberation Sans", sans-serif; fill: #555; }
.key text { font: 700 4px "Liberation Sans", sans-serif; fill: #333; }
.charttip text { font: 4px "Liberation Sans", sans-serif; fill: #333; }
.b { font-weight: 700; }
.band { font: 5.200px "Liberation Sans", sans-serif; fill: #222; text-anchor: middle; }
.scale { font: 5px "Liberation Sans", sans-serif; fill: #222; }
.tip text { font: 4.200px "Liberation Sans", sans-serif; fill: #fff; stroke: #fff; stroke-width: .12px; }
.edges { fill: none; stroke: #999; stroke-opacity: .36; stroke-width: 1.800px; }
.grey .edges { stroke: #ccc; stroke-opacity: .6; }
.big .edges { stroke: #6fa3bd; stroke-opacity: .22; }
.tails { fill: none; stroke: #aaa; stroke-opacity: .6; stroke-width: 2px; }
.hull { fill: #b1dff6; stroke: #d8eefa; stroke-width: 3px; }
.grey .hull { fill: #ddd; fill-opacity: .85; stroke: none; }
.hot { fill: none; stroke: #ec7078; stroke-opacity: .58; stroke-width: 2.600px; }
.grey .hot { stroke: #f0686f; stroke-opacity: .85; stroke-width: 4.500px; }
.grey .dash { stroke-dasharray: 6 5; }
.big .dash { stroke: #dd5f6c; stroke-opacity: .75; stroke-width: 2.200px; stroke-dasharray: 4 3.500; }
.plain { fill: #fcdf72; }
.big .plain { stroke: #f8f0cc; stroke-width: 2.400px; }
.ringed { fill: #f7d765; stroke: #6b695e; stroke-width: 2.600px; }
.grey .ringed { stroke-width: 3.600px; }
.module { fill: #f7b4d3; stroke: #fbd5e6; stroke-width: 2.500px; }
.grey .module { fill: #cacaca; stroke: #eee; stroke-width: 3px; }
.chosen { fill: #f7b4d3; stroke: #5bbbdf; stroke-width: 4px; }
.grey .chosen { stroke-width: 6.500px; }
</style>
